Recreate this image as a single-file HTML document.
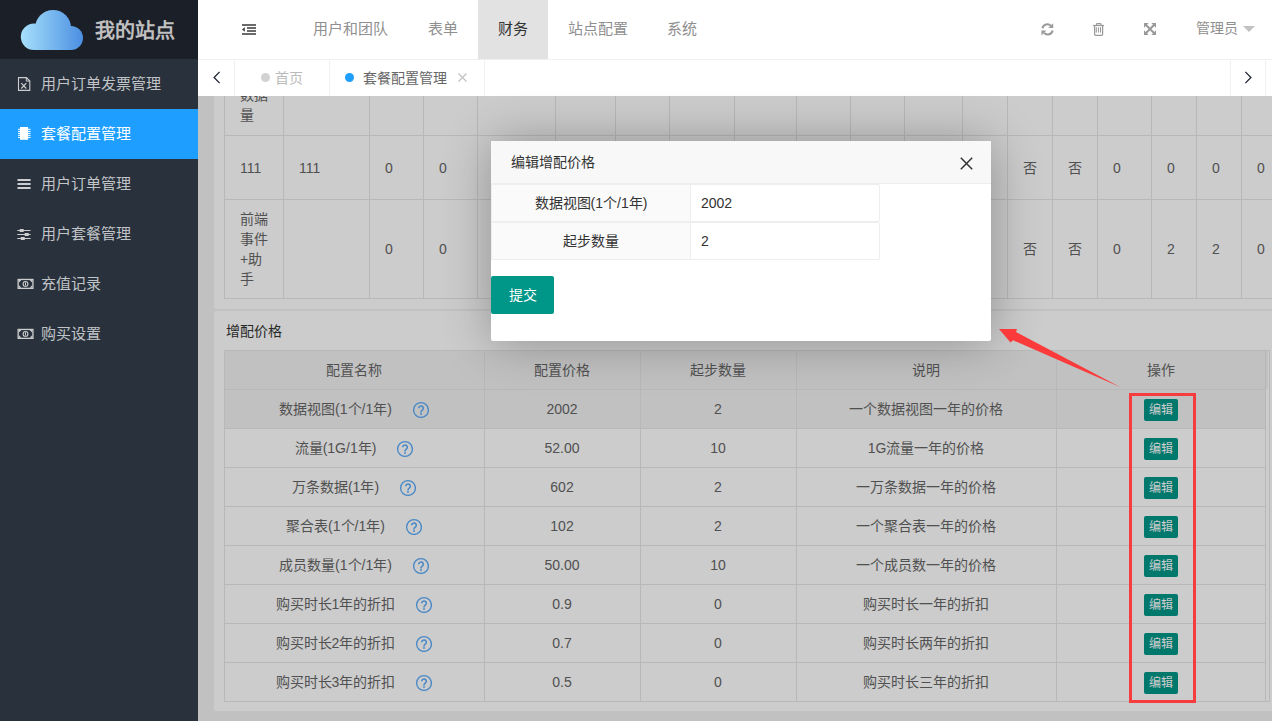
<!DOCTYPE html>
<html lang="zh-CN">
<head>
<meta charset="utf-8">
<style>
*{box-sizing:border-box;margin:0;padding:0}
html,body{width:1272px;height:721px;overflow:hidden}
body{position:relative;font-family:"Liberation Sans",sans-serif;font-size:14px;color:#666;background:#f2f2f2}
.abs{position:absolute}
/* sidebar */
#side{position:absolute;left:0;top:0;width:198px;height:721px;background:#28313c}
#logo{position:absolute;left:0;top:0;width:198px;height:59px;background:#1b1f27}
#logo .t{position:absolute;left:95px;top:16px;font-size:20px;font-weight:bold;color:#c0c0c0;line-height:30px;white-space:nowrap}
.mi{position:absolute;left:0;width:198px;height:50px;line-height:50px;color:rgba(255,255,255,.72);font-size:15px;white-space:nowrap}
.mi .tx{position:absolute;left:41px;top:0}
.mi svg{position:absolute;left:17px;top:18px}
.mi.on{background:#1e9fff;color:#fff}
/* header */
#head{position:absolute;left:198px;top:0;width:1074px;height:60px;background:#fff;border-bottom:1px solid #f0f0f0}
.nv{position:absolute;top:0;height:59px;line-height:57px;font-size:15px;color:#8f8f8f;white-space:nowrap}
.nv.on{background:#e2e2e2;color:#333}
/* tabs */
#tabs{position:absolute;left:198px;top:60px;width:1074px;height:36px;background:#fff}
.tb{position:absolute;top:0;height:36px;border-right:1px solid #f0f0f0;line-height:36px;white-space:nowrap}
/* content */
#cont{position:absolute;left:198px;top:96px;width:1074px;height:625px;background:#f2f2f2;overflow:hidden}
.panel{position:absolute;background:#fff;border-radius:2px}
table{border-collapse:collapse;table-layout:fixed}
td,th{border:1px solid #e6e6e6;padding:9px 15px;line-height:20px;font-weight:normal;text-align:left;color:#666;font-size:14px;overflow:hidden}
.vl{position:absolute;width:1px;background:#e6e6e6}
.hl{position:absolute;height:1px;background:#e6e6e6}
.t1{position:absolute;line-height:20px;font-size:14px;color:#666;white-space:nowrap}
.t1.c{text-align:center}
.q{display:inline-block;vertical-align:top;margin-left:20px;margin-top:2px}
.btn{position:absolute;width:34px;height:22px;line-height:22px;font-size:12px;color:#fff;background:#009688;border-radius:2px;text-align:center}
#shade{position:absolute;left:198px;top:96px;width:1074px;height:625px;background:rgba(0,0,0,.2)}
/* modal */
#modal{position:absolute;left:491px;top:141px;width:500px;height:200px;background:#fff;box-shadow:1px 1px 50px rgba(0,0,0,.3);border-radius:2px}
#modal .title{height:43px;line-height:42px;background:#f8f8f8;border-bottom:1px solid #eee;padding-left:20px;color:#333;font-size:14px}
</style>
</head>
<body>

<!-- SIDEBAR -->
<div id="side">
  <div id="logo">
    <svg class="abs" style="left:0;top:0" width="100" height="59" viewBox="0 0 100 59">
      <defs><linearGradient id="cg" gradientUnits="userSpaceOnUse" x1="21" x2="83" y1="0" y2="0"><stop offset="0" stop-color="#a6e0fc"/><stop offset="1" stop-color="#4b8fe2"/></linearGradient></defs>
      <g fill="url(#cg)">
        <circle cx="53.1" cy="28" r="18"/>
        <circle cx="34" cy="36.8" r="13.2"/>
        <circle cx="71" cy="38" r="12"/>
        <rect x="34" y="30" width="37" height="20"/>
      </g>
    </svg>
    <div class="t">我的站点</div>
  </div>
  <div class="mi" style="top:59px"><svg width="16" height="15" viewBox="0 0 16 15"><path d="M1.5 .6h8l3.3 3.3v9.5H1.5z" fill="none" stroke="#cdcdcd" stroke-width="1.1"/><path d="M9.3 .6v3.5h3.5z" fill="none" stroke="#cdcdcd" stroke-width="1"/><path d="M4.3 6.1l5 5.4M9.3 6.1l-5 5.4" stroke="#cdcdcd" stroke-width="1.2"/></svg><span class="tx">用户订单发票管理</span></div>
  <div class="mi on" style="top:109px"><svg width="16" height="15" viewBox="0 0 16 15"><rect x="3" y="0" width="8.1" height="12.8" fill="#fff"/><path d="M1 2.3h2M1 4.4h2M1 6.4h2M1 8.4h2M1 10.4h2M11 2.3h2.6M11 4.4h2.6M11 6.4h2.6M11 8.4h2.6M11 10.4h2.6" stroke="#fff" stroke-width="1"/></svg><span class="tx">套餐配置管理</span></div>
  <div class="mi" style="top:159px"><svg width="16" height="15" viewBox="0 0 16 15"><path d="M.5 3h13.1M.5 7h13.1M.5 11h13.1" stroke="#cdcdcd" stroke-width="2"/></svg><span class="tx">用户订单管理</span></div>
  <div class="mi" style="top:209px"><svg width="16" height="15" viewBox="0 0 16 15"><path d="M.3 3.5h13.3M.3 7.5h13.3M.3 11.5h13.3" stroke="#cdcdcd" stroke-width="1"/><rect x="2.7" y="2" width="4" height="3" fill="#cdcdcd"/><rect x="7.7" y="6" width="4" height="3" fill="#cdcdcd"/><rect x="3.8" y="10" width="4" height="3" fill="#cdcdcd"/></svg><span class="tx">用户套餐管理</span></div>
  <div class="mi" style="top:259px"><svg width="17" height="15" viewBox="0 0 17 15"><rect x="1.15" y="2.45" width="14.8" height="8.9" fill="none" stroke="#cdcdcd" stroke-width="1.3"/><path d="M1.8 3.1h2.6L1.8 5.7zM15.3 3.1h-2.6l2.6 2.6zM1.8 10.7h2.6L1.8 8.1zM15.3 10.7h-2.6l2.6-2.6z" fill="#cdcdcd"/><circle cx="8.5" cy="6.9" r="2.4" fill="none" stroke="#cdcdcd" stroke-width="1.1"/><path d="M8.5 5.4v3" stroke="#cdcdcd" stroke-width="1"/></svg><span class="tx">充值记录</span></div>
  <div class="mi" style="top:309px"><svg width="17" height="15" viewBox="0 0 17 15"><rect x="1.15" y="2.45" width="14.8" height="8.9" fill="none" stroke="#cdcdcd" stroke-width="1.3"/><path d="M1.8 3.1h2.6L1.8 5.7zM15.3 3.1h-2.6l2.6 2.6zM1.8 10.7h2.6L1.8 8.1zM15.3 10.7h-2.6l2.6-2.6z" fill="#cdcdcd"/><circle cx="8.5" cy="6.9" r="2.4" fill="none" stroke="#cdcdcd" stroke-width="1.1"/><path d="M8.5 5.4v3" stroke="#cdcdcd" stroke-width="1"/></svg><span class="tx">购买设置</span></div>
</div>

<!-- HEADER -->
<div id="head">
  <svg class="abs" style="left:44px;top:24px" width="14" height="11" viewBox="0 0 14 11"><path d="M0 1h14M5 4h9M5 7h9M0 10h14" stroke="#3a3a3a" stroke-width="1.6"/><path d="M0 5.5l2.8-2.3v4.6z" fill="#3a3a3a"/></svg>
  <div class="nv" style="left:95px;padding:0 20px">用户和团队</div>
  <div class="nv" style="left:210px;padding:0 20px">表单</div>
  <div class="nv on" style="left:280px;width:70px;padding:0 20px">财务</div>
  <div class="nv" style="left:350px;padding:0 20px">站点配置</div>
  <div class="nv" style="left:449px;padding:0 20px">系统</div>
  <!-- right icons -->
  <svg class="abs" style="left:843px;top:23px" width="13" height="13" viewBox="0 0 13 13"><path d="M1.4 5.2A5.1 5.1 0 0 1 9.9 2.7" fill="none" stroke="#999" stroke-width="2.1"/><path d="M12.2 .2V5H7.4z" fill="#999"/><path d="M11.6 7.5A5.1 5.1 0 0 1 3.1 10.1" fill="none" stroke="#999" stroke-width="2.1"/><path d="M.5 12.4V7.4h4.8z" fill="#999"/></svg>
  <svg class="abs" style="left:895px;top:23px" width="12" height="13" viewBox="0 0 12 13"><path d="M0 2.5h11" stroke="#999" stroke-width="1.2"/><path d="M3.5 2.4V1.3q0-.7.7-.7h3.1q.7 0 .7.7v1.1M1.6 3v8.3q0 1 1 1h6q1 0 1-1V3" fill="none" stroke="#999" stroke-width="1.25"/><path d="M3.3 4.2v5.4M5.4 4.2v5.4M7.5 4.2v5.4" stroke="#999" stroke-width="1"/></svg>
  <svg class="abs" style="left:946px;top:23px" width="12" height="12" viewBox="0 0 12 12"><path d="M0 0h4.7L0 4.7zM12 0v4.7L7.3 0zM0 12V7.3L4.7 12zM12 12H7.3L12 7.3z" fill="#999"/><path d="M1.5 1.5l9 9M10.5 1.5l-9 9" stroke="#999" stroke-width="2"/></svg>
  <div class="nv" style="left:998px;font-size:14px">管理员</div>
  <div class="abs" style="left:1045px;top:26px;width:0;height:0;border-left:6px solid transparent;border-right:6px solid transparent;border-top:6px solid #c2c2c2"></div>
</div>

<!-- TABS -->
<div id="tabs">
  <div class="tb" style="left:0;width:37px"><svg class="abs" style="left:15px;top:10.5px" width="8" height="13" viewBox="0 0 8 13"><path d="M6.6 .9L1.1 6.5l5.5 5.6" fill="none" stroke="#1f2430" stroke-width="1.3"/></svg></div>
  <div class="tb" style="left:36px;width:96px;color:#bbb"><span class="abs" style="left:27px;top:13px;width:9px;height:9px;border-radius:50%;background:#d2d2d2"></span><span class="abs" style="left:41px;top:0">首页</span></div>
  <div class="tb" style="left:131px;width:156px;color:#666"><span class="abs" style="left:16px;top:13px;width:9px;height:9px;border-radius:50%;background:#1e9fff"></span><span class="abs" style="left:34px;top:0">套餐配置管理</span><svg class="abs" style="left:129px;top:13px" width="9" height="9" viewBox="0 0 9 9"><path d="M.5 .5l8 8M8.5 .5l-8 8" stroke="#c2c2c2" stroke-width="1.2"/></svg></div>
  <div class="tb" style="left:1032px;width:36px;border-left:1px solid #f0f0f0"><svg class="abs" style="left:13px;top:11px" width="8" height="13" viewBox="0 0 8 13"><path d="M1.4 .9L6.9 6.5l-5.5 5.6" fill="none" stroke="#1f2430" stroke-width="1.3"/></svg></div>
</div>

<!-- CONTENT -->
<div id="cont">
<div class="panel" style="left:16px;top:-120px;width:1100px;height:333px"></div>
<div class="vl" style="left:26px;top:-10px;height:213px"></div>
<div class="vl" style="left:85px;top:-10px;height:213px"></div>
<div class="vl" style="left:171px;top:-10px;height:213px"></div>
<div class="vl" style="left:225px;top:-10px;height:213px"></div>
<div class="vl" style="left:279px;top:-10px;height:213px"></div>
<div class="vl" style="left:357px;top:-10px;height:213px"></div>
<div class="vl" style="left:417px;top:-10px;height:213px"></div>
<div class="vl" style="left:471px;top:-10px;height:213px"></div>
<div class="vl" style="left:536px;top:-10px;height:213px"></div>
<div class="vl" style="left:598px;top:-10px;height:213px"></div>
<div class="vl" style="left:652px;top:-10px;height:213px"></div>
<div class="vl" style="left:706px;top:-10px;height:213px"></div>
<div class="vl" style="left:764px;top:-10px;height:213px"></div>
<div class="vl" style="left:809px;top:-10px;height:213px"></div>
<div class="vl" style="left:854px;top:-10px;height:213px"></div>
<div class="vl" style="left:899px;top:-10px;height:213px"></div>
<div class="vl" style="left:953px;top:-10px;height:213px"></div>
<div class="vl" style="left:998px;top:-10px;height:213px"></div>
<div class="vl" style="left:1043px;top:-10px;height:213px"></div>
<div class="vl" style="left:1088px;top:-10px;height:213px"></div>
<div class="hl" style="left:26px;top:39px;width:1100px"></div>
<div class="hl" style="left:26px;top:103px;width:1100px"></div>
<div class="hl" style="left:26px;top:202px;width:1100px"></div>
<div class="t1" style="left:42px;top:-11px;">数据</div>
<div class="t1" style="left:42px;top:9px;">量</div>
<div class="t1" style="left:42px;top:62px;">111</div>
<div class="t1" style="left:101px;top:62px;">111</div>
<div class="t1" style="left:187px;top:62px;">0</div>
<div class="t1" style="left:241px;top:62px;">0</div>
<div class="t1" style="left:825px;top:62px;">否</div>
<div class="t1" style="left:870px;top:62px;">否</div>
<div class="t1" style="left:915px;top:62px;">0</div>
<div class="t1" style="left:969px;top:62px;">0</div>
<div class="t1" style="left:1014px;top:62px;">0</div>
<div class="t1" style="left:1059px;top:62px;">0</div>
<div class="t1" style="left:42px;top:113px;">前端</div>
<div class="t1" style="left:42px;top:133px;">事件</div>
<div class="t1" style="left:42px;top:153px;">+助</div>
<div class="t1" style="left:42px;top:173px;">手</div>
<div class="t1" style="left:187px;top:143px;">0</div>
<div class="t1" style="left:241px;top:143px;">0</div>
<div class="t1" style="left:825px;top:143px;">否</div>
<div class="t1" style="left:870px;top:143px;">否</div>
<div class="t1" style="left:915px;top:143px;">0</div>
<div class="t1" style="left:969px;top:143px;">2</div>
<div class="t1" style="left:1014px;top:143px;">2</div>
<div class="t1" style="left:1059px;top:143px;">0</div>
<div class="panel" style="left:16px;top:215px;width:1100px;height:400px"></div>
<div class="t1" style="left:28px;top:225px;color:#333">增配价格</div>
<div class="abs" style="left:26px;top:254px;width:1046px;height:352px;border:1px solid #e6e6e6"></div>
<div class="abs" style="left:27px;top:255px;width:1043px;height:38px;background:#f2f2f2"></div>
<div class="abs" style="left:27px;top:294px;width:1040px;height:38px;background:#f2f2f2"></div>
<div class="vl" style="left:286px;top:254px;height:352px"></div>
<div class="vl" style="left:442px;top:254px;height:352px"></div>
<div class="vl" style="left:598px;top:254px;height:352px"></div>
<div class="vl" style="left:858px;top:254px;height:352px"></div>
<div class="vl" style="left:1067px;top:254px;height:352px"></div>
<div class="hl" style="left:26px;top:293px;width:1041px"></div>
<div class="hl" style="left:26px;top:332px;width:1041px"></div>
<div class="hl" style="left:26px;top:371px;width:1041px"></div>
<div class="hl" style="left:26px;top:410px;width:1041px"></div>
<div class="hl" style="left:26px;top:449px;width:1041px"></div>
<div class="hl" style="left:26px;top:488px;width:1041px"></div>
<div class="hl" style="left:26px;top:527px;width:1041px"></div>
<div class="hl" style="left:26px;top:566px;width:1041px"></div>
<div class="t1 c" style="left:26px;width:260px;top:264px;">配置名称</div>
<div class="t1 c" style="left:286px;width:156px;top:264px;">配置价格</div>
<div class="t1 c" style="left:442px;width:156px;top:264px;">起步数量</div>
<div class="t1 c" style="left:598px;width:260px;top:264px;">说明</div>
<div class="t1 c" style="left:858px;width:209px;top:264px;">操作</div>
<div class="t1 c" style="left:26px;width:260px;top:302.5px;">数据视图(1个/1年)<svg class="q" width="17" height="17" viewBox="0 0 17 17"><circle cx="9" cy="9" r="7.4" fill="none" stroke="#5eacf8" stroke-width="1.35"/><path d="M6.7 7.3A2.3 2.3 0 1 1 10.3 9.2C9.4 9.8 9 10.2 9 11v.4" fill="none" stroke="#5eacf8" stroke-width="1.6"/><circle cx="9" cy="13" r=".95" fill="#5eacf8"/></svg></div>
<div class="t1 c" style="left:286px;width:156px;top:302.5px;">2002</div>
<div class="t1 c" style="left:442px;width:156px;top:302.5px;">2</div>
<div class="t1 c" style="left:598px;width:260px;top:302.5px;">一个数据视图一年的价格</div>
<div class="btn" style="left:946px;top:303px">编辑</div>
<div class="t1 c" style="left:26px;width:260px;top:341.5px;">流量(1G/1年)<svg class="q" width="17" height="17" viewBox="0 0 17 17"><circle cx="9" cy="9" r="7.4" fill="none" stroke="#5eacf8" stroke-width="1.35"/><path d="M6.7 7.3A2.3 2.3 0 1 1 10.3 9.2C9.4 9.8 9 10.2 9 11v.4" fill="none" stroke="#5eacf8" stroke-width="1.6"/><circle cx="9" cy="13" r=".95" fill="#5eacf8"/></svg></div>
<div class="t1 c" style="left:286px;width:156px;top:341.5px;">52.00</div>
<div class="t1 c" style="left:442px;width:156px;top:341.5px;">10</div>
<div class="t1 c" style="left:598px;width:260px;top:341.5px;">1G流量一年的价格</div>
<div class="btn" style="left:946px;top:342px">编辑</div>
<div class="t1 c" style="left:26px;width:260px;top:380.5px;">万条数据(1年)<svg class="q" width="17" height="17" viewBox="0 0 17 17"><circle cx="9" cy="9" r="7.4" fill="none" stroke="#5eacf8" stroke-width="1.35"/><path d="M6.7 7.3A2.3 2.3 0 1 1 10.3 9.2C9.4 9.8 9 10.2 9 11v.4" fill="none" stroke="#5eacf8" stroke-width="1.6"/><circle cx="9" cy="13" r=".95" fill="#5eacf8"/></svg></div>
<div class="t1 c" style="left:286px;width:156px;top:380.5px;">602</div>
<div class="t1 c" style="left:442px;width:156px;top:380.5px;">2</div>
<div class="t1 c" style="left:598px;width:260px;top:380.5px;">一万条数据一年的价格</div>
<div class="btn" style="left:946px;top:381px">编辑</div>
<div class="t1 c" style="left:26px;width:260px;top:419.5px;">聚合表(1个/1年)<svg class="q" width="17" height="17" viewBox="0 0 17 17"><circle cx="9" cy="9" r="7.4" fill="none" stroke="#5eacf8" stroke-width="1.35"/><path d="M6.7 7.3A2.3 2.3 0 1 1 10.3 9.2C9.4 9.8 9 10.2 9 11v.4" fill="none" stroke="#5eacf8" stroke-width="1.6"/><circle cx="9" cy="13" r=".95" fill="#5eacf8"/></svg></div>
<div class="t1 c" style="left:286px;width:156px;top:419.5px;">102</div>
<div class="t1 c" style="left:442px;width:156px;top:419.5px;">2</div>
<div class="t1 c" style="left:598px;width:260px;top:419.5px;">一个聚合表一年的价格</div>
<div class="btn" style="left:946px;top:420px">编辑</div>
<div class="t1 c" style="left:26px;width:260px;top:458.5px;">成员数量(1个/1年)<svg class="q" width="17" height="17" viewBox="0 0 17 17"><circle cx="9" cy="9" r="7.4" fill="none" stroke="#5eacf8" stroke-width="1.35"/><path d="M6.7 7.3A2.3 2.3 0 1 1 10.3 9.2C9.4 9.8 9 10.2 9 11v.4" fill="none" stroke="#5eacf8" stroke-width="1.6"/><circle cx="9" cy="13" r=".95" fill="#5eacf8"/></svg></div>
<div class="t1 c" style="left:286px;width:156px;top:458.5px;">50.00</div>
<div class="t1 c" style="left:442px;width:156px;top:458.5px;">10</div>
<div class="t1 c" style="left:598px;width:260px;top:458.5px;">一个成员数一年的价格</div>
<div class="btn" style="left:946px;top:459px">编辑</div>
<div class="t1 c" style="left:26px;width:260px;top:497.5px;">购买时长1年的折扣<svg class="q" width="17" height="17" viewBox="0 0 17 17"><circle cx="9" cy="9" r="7.4" fill="none" stroke="#5eacf8" stroke-width="1.35"/><path d="M6.7 7.3A2.3 2.3 0 1 1 10.3 9.2C9.4 9.8 9 10.2 9 11v.4" fill="none" stroke="#5eacf8" stroke-width="1.6"/><circle cx="9" cy="13" r=".95" fill="#5eacf8"/></svg></div>
<div class="t1 c" style="left:286px;width:156px;top:497.5px;">0.9</div>
<div class="t1 c" style="left:442px;width:156px;top:497.5px;">0</div>
<div class="t1 c" style="left:598px;width:260px;top:497.5px;">购买时长一年的折扣</div>
<div class="btn" style="left:946px;top:498px">编辑</div>
<div class="t1 c" style="left:26px;width:260px;top:536.5px;">购买时长2年的折扣<svg class="q" width="17" height="17" viewBox="0 0 17 17"><circle cx="9" cy="9" r="7.4" fill="none" stroke="#5eacf8" stroke-width="1.35"/><path d="M6.7 7.3A2.3 2.3 0 1 1 10.3 9.2C9.4 9.8 9 10.2 9 11v.4" fill="none" stroke="#5eacf8" stroke-width="1.6"/><circle cx="9" cy="13" r=".95" fill="#5eacf8"/></svg></div>
<div class="t1 c" style="left:286px;width:156px;top:536.5px;">0.7</div>
<div class="t1 c" style="left:442px;width:156px;top:536.5px;">0</div>
<div class="t1 c" style="left:598px;width:260px;top:536.5px;">购买时长两年的折扣</div>
<div class="btn" style="left:946px;top:537px">编辑</div>
<div class="t1 c" style="left:26px;width:260px;top:575.5px;">购买时长3年的折扣<svg class="q" width="17" height="17" viewBox="0 0 17 17"><circle cx="9" cy="9" r="7.4" fill="none" stroke="#5eacf8" stroke-width="1.35"/><path d="M6.7 7.3A2.3 2.3 0 1 1 10.3 9.2C9.4 9.8 9 10.2 9 11v.4" fill="none" stroke="#5eacf8" stroke-width="1.6"/><circle cx="9" cy="13" r=".95" fill="#5eacf8"/></svg></div>
<div class="t1 c" style="left:286px;width:156px;top:575.5px;">0.5</div>
<div class="t1 c" style="left:442px;width:156px;top:575.5px;">0</div>
<div class="t1 c" style="left:598px;width:260px;top:575.5px;">购买时长三年的折扣</div>
<div class="btn" style="left:946px;top:576px">编辑</div>
</div>

<div id="shade"></div>

<!-- MODAL -->
<div id="modal">
  <div class="title">编辑增配价格</div>
  <svg class="abs" style="left:469px;top:16px" width="13" height="13" viewBox="0 0 13 13"><path d="M.8 .8l11.4 11.4M12.2 .8L.8 12.2" stroke="#333" stroke-width="1.5"/></svg>
  <div class="abs" style="left:0;top:43px;width:200px;height:38px;border:1px solid #eee;background:#fafafa;line-height:36px;text-align:center;color:#333">数据视图(1个/1年)</div>
  <div class="abs" style="left:199px;top:43px;width:190px;height:38px;border:1px solid #eee;border-radius:0 2px 2px 0;line-height:36px;padding-left:10px;color:#333">2002</div>
  <div class="abs" style="left:0;top:81px;width:200px;height:38px;border:1px solid #eee;background:#fafafa;line-height:36px;text-align:center;color:#333">起步数量</div>
  <div class="abs" style="left:199px;top:81px;width:190px;height:38px;border:1px solid #eee;border-radius:0 2px 2px 0;line-height:36px;padding-left:10px;color:#333">2</div>
  <div class="abs" style="left:0;top:135px;width:63px;height:38px;line-height:38px;text-align:center;background:#009688;color:#fff;border-radius:2px">提交</div>
</div>

<!-- ANNOTATIONS -->
<div class="abs" style="left:1129px;top:393px;width:67px;height:310px;border:3px solid #f63c3c"></div>
<svg class="abs" style="left:0;top:0" width="1272" height="721" viewBox="0 0 1272 721"><path d="M999 329L1017 329L1016 332L1120 387L1013 340.3L1010.5 342.5Z" fill="#fb3b3b"/></svg>

</body>
</html>
